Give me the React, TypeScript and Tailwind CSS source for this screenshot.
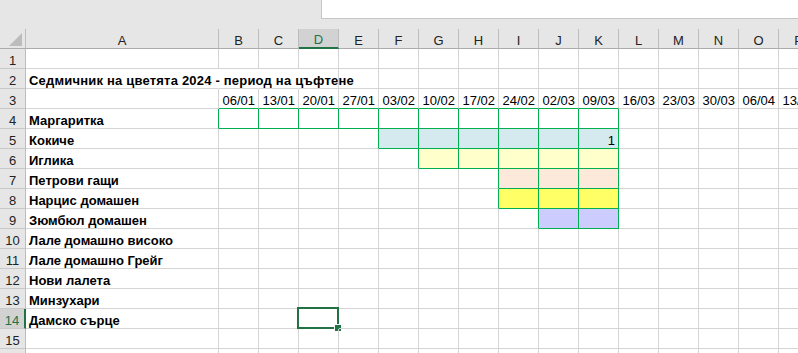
import React from "react";

const COLS = ["A", "B", "C", "D", "E", "F", "G", "H", "I", "J", "K", "L", "M", "N", "O", "P"];

const DATES = [
  "06/01", "13/01", "20/01", "27/01", "03/02", "10/02", "17/02", "24/02",
  "02/03", "09/03", "16/03", "23/03", "30/03", "06/04", "13/04",
];

const NAMES: Record<number, string> = {
  4: "Маргаритка",
  5: "Кокиче",
  6: "Иглика",
  7: "Петрови гащи",
  8: "Нарцис домашен",
  9: "Зюмбюл домашен",
  10: "Лале домашно високо",
  11: "Лале домашно Грейг",
  12: "Нови лалета",
  13: "Минзухари",
  14: "Дамско сърце",
};

// flowering periods: column index (1 = B) from..to, fill class
const FILLS: Record<number, { from: number; to: number; bg: string }> = {
  4: { from: 1, to: 10, bg: "" },
  5: { from: 5, to: 10, bg: "bg-[#d5eaee]" },
  6: { from: 6, to: 10, bg: "bg-[#ffffcc]" },
  7: { from: 8, to: 10, bg: "bg-[#fce9da]" },
  8: { from: 8, to: 10, bg: "bg-[#ffff66]" },
  9: { from: 9, to: 10, bg: "bg-[#ccccff]" },
};

const ROWS = Array.from({ length: 16 }, (_, i) => i + 1);

const isGreen = (r: number, c: number) => {
  const f = FILLS[r];
  return !!f && c >= f.from && c <= f.to;
};

function Cell({ r, c }: { r: number; c: number }) {
  const green = isGreen(r, c);
  let right = isGreen(r, c) || isGreen(r, c + 1) ? "border-r-[#00b050]" : "border-r-[#d4d4d4]";
  const bottom = isGreen(r, c) || isGreen(r + 1, c) ? "border-b-[#00b050]" : "border-b-[#d4d4d4]";
  // title text runs over A..D, gridlines hidden under it
  if (r === 2 && c < 3) right = "border-r-transparent";
  const bg = green ? FILLS[r].bg : "";

  let content: React.ReactNode = null;
  let align = "justify-start";
  if (c === 0 && r === 2) {
    content = (
      <span className="whitespace-nowrap font-bold tracking-[0.2px]">
        Седмичник на цветята 2024 - период на цъфтене
      </span>
    );
  } else if (c === 0 && NAMES[r]) {
    content = <span className="whitespace-nowrap font-bold">{NAMES[r]}</span>;
  } else if (r === 3 && c > 0) {
    content = <span className="whitespace-nowrap">{DATES[c - 1]}</span>;
    align = "justify-end";
  } else if (r === 5 && c === 10) {
    content = <span>1</span>;
    align = "justify-end";
  }

  return (
    <div
      className={`relative flex h-[20px] items-end border-r border-b ${right} ${bottom} ${bg} ${align} px-[3px] text-[13px] leading-[15px] text-black`}
    >
      {content}
      {r === 14 && c === 3 && (
        <div className="absolute -top-[2px] -left-[2px] h-[22px] w-[42px] border-2 border-[#217346]">
          <div className="absolute -right-[4px] -bottom-[4px] h-[7px] w-[7px] border-t border-l border-white bg-[#217346]" />
        </div>
      )}
    </div>
  );
}

export default function App() {
  return (
    <div
      className="h-[353px] w-[798px] overflow-hidden bg-white"
      style={{ fontFamily: '"Liberation Sans", Arial, sans-serif' }}
    >
      {/* top strip with formula box */}
      <div className="flex h-[29px] bg-[#e6e6e6]">
        <div className="w-[321px]" />
        <div className="h-[19px] flex-1 border-b border-l border-[#c6c6c6] bg-white" />
      </div>

      <div className="grid grid-cols-[26px_193px_repeat(15,40px)]">
        {/* column headers */}
        <div className="flex h-[20px] items-end justify-end border-r border-b border-r-[#bcbcbc] border-b-[#ababab] bg-[#e6e6e6] pr-[3px] pb-[2px]">
          <svg width="13" height="13" viewBox="0 0 13 13">
            <polygon points="13,0 13,13 0,13" fill="#bcbcbc" />
          </svg>
        </div>
        {COLS.map((col, i) =>
          i === 3 ? (
            <div
              key={col}
              className="flex h-[20px] items-end justify-center border-r border-b-2 border-r-[#bcbcbc] border-b-[#217346] bg-[#d2d2d2] text-[13px] leading-[15px] text-[#217346]"
            >
              {col}
            </div>
          ) : (
            <div
              key={col}
              className="flex h-[20px] items-end justify-center border-r border-b border-r-[#bcbcbc] border-b-[#ababab] bg-[#e6e6e6] text-[13px] leading-[15px] text-[#222]"
            >
              {col}
            </div>
          )
        )}

        {ROWS.map((r) => (
          <React.Fragment key={r}>
            {r === 14 ? (
              <div className="flex h-[20px] items-end justify-center border-r-2 border-b border-r-[#217346] border-b-[#c8c8c8] bg-[#d2d2d2] text-[13px] leading-[15px] text-[#217346]">
                {r}
              </div>
            ) : (
              <div className="flex h-[20px] items-end justify-center border-r border-b border-r-[#bcbcbc] border-b-[#c8c8c8] bg-[#e6e6e6] text-[13px] leading-[15px] text-[#222]">
                {r < 16 ? r : null}
              </div>
            )}
            {COLS.map((col, c) => (
              <Cell key={col} r={r} c={c} />
            ))}
          </React.Fragment>
        ))}
      </div>
    </div>
  );
}
